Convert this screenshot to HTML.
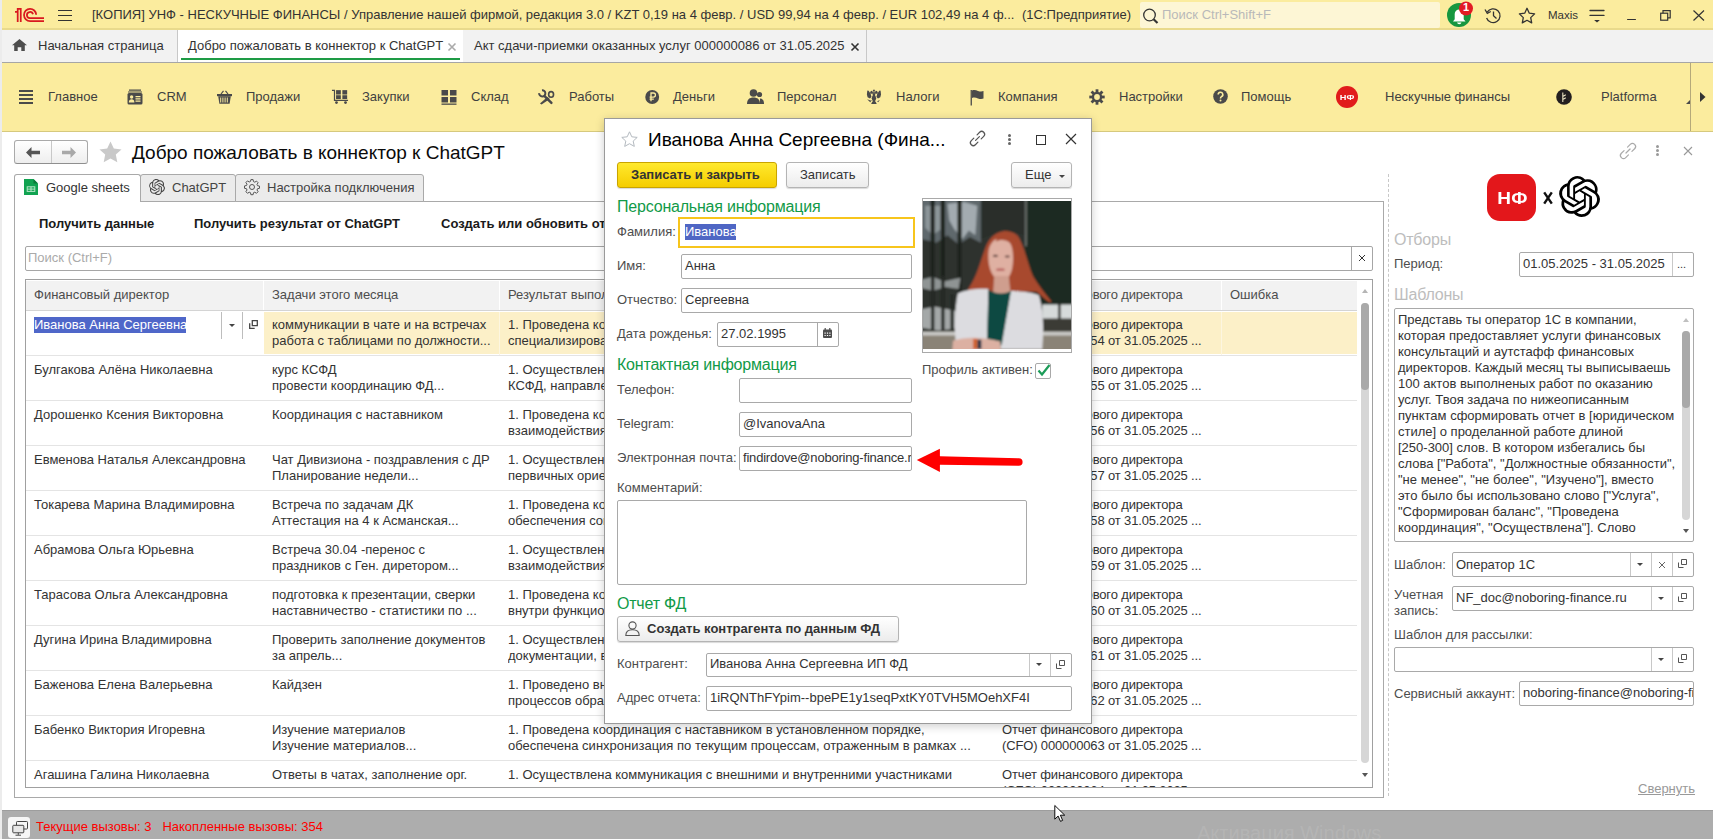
<!DOCTYPE html>
<html><head><meta charset="utf-8">
<style>
*{box-sizing:border-box}
html,body{margin:0;padding:0}
body{width:1713px;height:839px;overflow:hidden;position:relative;background:#fff;font-family:"Liberation Sans",sans-serif;font-size:13px;color:#333;}
.a{position:absolute}
.t{position:absolute;white-space:pre;line-height:16px}
.inp{position:absolute;border:1px solid #a9a9a9;border-radius:2px;background:#fff}
svg{position:absolute;overflow:visible}
</style></head><body>

<!-- TITLE BAR -->
<div class="a" style="left:0;top:0;width:1713px;height:30px;background:#fbec9e;border-bottom:2px solid #e9da8c"></div>
<svg style="left:0;top:0" width="50" height="30" viewBox="0 0 50 30">
 <g fill="none" stroke="#d9181f" stroke-width="1.75">
  <path d="M15 11.9H17.7M17.7 21.9V8.9H20.75V21.9"/>
  <path d="M36.2 14.7A6.1 6.1 0 1 0 30.1 21.05H44"/>
  <path d="M33 14.3A3.1 3.1 0 1 0 29.9 18.2H44"/>
 </g>
</svg>
<div class="a" style="left:58px;top:10px;width:14px;height:1.4px;background:#333"></div>
<div class="a" style="left:58px;top:15px;width:14px;height:1.4px;background:#333"></div>
<div class="a" style="left:58px;top:20px;width:14px;height:1.4px;background:#333"></div>
<div class="t" style="left:92px;top:7px;color:#333">[КОПИЯ] УНФ - НЕСКУЧНЫЕ ФИНАНСЫ / Управление нашей фирмой, редакция 3.0 / KZT 0,19 на 4 февр. / USD 99,94 на 4 февр. / EUR 102,49 на 4 ф...</div>
<div class="t" style="left:1022px;top:7px;color:#333">(1С:Предприятие)</div>
<div class="a" style="left:1140px;top:2px;width:300px;height:26px;background:#fdf6d5;border-radius:2px"></div>
<div class="t" style="left:1162px;top:7px;color:#b9b9b9">Поиск Ctrl+Shift+F</div>

<svg style="left:1142px;top:8px" width="17" height="16" viewBox="0 0 17 16"><circle cx="7.5" cy="7" r="5.8" fill="none" stroke="#333" stroke-width="1.3"/><path d="M11.6 11.2L15.5 15" stroke="#333" stroke-width="2.2"/></svg>
<svg style="left:1446px;top:2px" width="30" height="27" viewBox="0 0 30 27"><circle cx="13" cy="13" r="12" fill="#16973f"/><path d="M7 19.5h12.5l-1.8-2.3V12a4.5 4.5 0 0 0-9 0v5.2z" fill="#fff"/><path d="M11 20.5h4.5a2.3 2.3 0 0 1-4.5 0z" fill="#fff"/><circle cx="20" cy="6.5" r="7" fill="#e21b24"/></svg>
<div class="a" style="left:1459px;top:-1px;width:14px;text-align:center;font-weight:bold;font-size:11px;line-height:16px;color:#fff">1</div>
<svg style="left:1484px;top:7px" width="18" height="17" viewBox="0 0 18 17"><path d="M3.2 5.2A6.9 6.9 0 1 1 2.6 11" fill="none" stroke="#333" stroke-width="1.3"/><path d="M1 2.5L3.3 6.3L6.8 4.5" fill="none" stroke="#333" stroke-width="1.3"/><path d="M9.5 4.5V8.8L12.5 11.5" fill="none" stroke="#333" stroke-width="1.3"/></svg>
<svg style="left:1518px;top:7px" width="18" height="17" viewBox="0 0 18 17"><path d="M9 1.3l2.3 4.9 5.3 0.7-3.9 3.7 1 5.3-4.7-2.6-4.7 2.6 1-5.3L1.4 6.9l5.3-0.7z" fill="none" stroke="#333" stroke-width="1.3" stroke-linejoin="round"/></svg>
<div class="t" style="left:1548px;top:7px;font-size:11.5px;color:#333">Maxis</div>
<svg style="left:1589px;top:9px" width="16" height="15" viewBox="0 0 16 15"><path d="M1 1.5H15M1 6.4H15" stroke="#333" stroke-width="1.3" stroke-linecap="round"/><path d="M5.1 11H10.9L8 13.6z" fill="#333"/></svg>
<div class="a" style="left:1627px;top:18.8px;width:9px;height:1.3px;background:#333;border-radius:1px"></div>
<svg style="left:1660px;top:10px" width="11" height="11" viewBox="0 0 11 11"><path d="M3 3.2V0.7H10.2V7.9H7.7" fill="none" stroke="#333" stroke-width="1.2"/><rect x="0.7" y="3.2" width="7" height="7" fill="none" stroke="#333" stroke-width="1.2"/></svg>
<svg style="left:1693px;top:10px" width="12" height="11" viewBox="0 0 12 11"><path d="M0.5 0.5L11 10.5M11 0.5L0.5 10.5" stroke="#333" stroke-width="1.2"/></svg>

<!-- TAB BAR -->
<div class="a" style="left:0;top:30px;width:1713px;height:33px;background:#f2f2f2;border-bottom:1px solid #a6a6a6"></div>
<div class="t" style="left:38px;top:38px">Начальная страница</div>
<div class="a" style="left:177px;top:30px;width:287px;height:32px;background:#fff;border-left:1px solid #c8c8c8;border-right:1px solid #c8c8c8"></div>
<div class="a" style="left:181px;top:58px;width:279px;height:2px;background:#1e9b45"></div>
<div class="t" style="left:188px;top:38px">Добро пожаловать в коннектор к ChatGPT</div>
<div class="a" style="left:463px;top:30px;width:404px;height:32px;background:#f2f2f2;border-right:1px solid #c8c8c8"></div>
<div class="t" style="left:474px;top:38px">Акт сдачи-приемки оказанных услуг 000000086 от 31.05.2025</div>

<svg style="left:12px;top:39px" width="15" height="12" viewBox="0 0 15 12"><path d="M7.5 0L15 6.3H12.8V12H9.3V8.3H5.7V12H2.2V6.3H0z" fill="#4d4d4d"/></svg>
<svg style="left:448px;top:43px" width="8" height="8" viewBox="0 0 8 8"><path d="M0.5 0.5L7.5 7.5M7.5 0.5L0.5 7.5" stroke="#aaa" stroke-width="1.6"/></svg>
<svg style="left:851px;top:43px" width="8" height="8" viewBox="0 0 8 8"><path d="M0.5 0.5L7.5 7.5M7.5 0.5L0.5 7.5" stroke="#333" stroke-width="1.6"/></svg>

<!-- SECTION PANEL -->
<div class="a" style="left:0;top:63px;width:1713px;height:69px;background:#fbec9e;border-bottom:1px solid #d6c97e"></div>


<!-- SECTION ITEMS -->
<div class="a" style="left:19px;top:90px;width:14px;height:2px;background:#4a4a4a"></div>
<div class="a" style="left:19px;top:94px;width:14px;height:2px;background:#4a4a4a"></div>
<div class="a" style="left:19px;top:98px;width:14px;height:2px;background:#4a4a4a"></div>
<div class="a" style="left:19px;top:102px;width:14px;height:2px;background:#4a4a4a"></div>
<svg style="left:127px;top:89px" width="16" height="16" viewBox="0 0 16 16"><path d="M2 0.5h12v1.3H2z M1 2.5h14v1H1z" fill="#4a4a4a"/><rect x="0.5" y="4" width="15" height="11.5" rx="1.5" fill="#4a4a4a"/><circle cx="4.6" cy="8" r="1.7" fill="#fbec9e"/><path d="M1.8 13.5c0-2.3 1.2-3.3 2.8-3.3s2.8 1 2.8 3.3z" fill="#fbec9e"/><path d="M8.5 7h5v1.2h-5zM8.5 9.3h5v1.2h-5zM8.5 11.6h5v1.2h-5z" fill="#fbec9e"/></svg>
<svg style="left:217px;top:90px" width="15" height="14" viewBox="0 0 15 14"><path d="M4 4L6.5 0.8M11 4L8.5 0.8" stroke="#4a4a4a" stroke-width="1.2" fill="none"/><rect x="0" y="4" width="15" height="2.2" fill="#4a4a4a"/><path d="M1.2 6.2h12.6l-1.2 7.6H2.4z" fill="#4a4a4a"/><path d="M3.7 7.5v5M5.9 7.5v5M8.1 7.5v5M10.3 7.5v5" stroke="#fbec9e" stroke-width="1"/></svg>
<svg style="left:320px;top:84px" width="100" height="26" viewBox="0 0 1713 445"><g fill="#4a4a4a">
<path d="M205 100H258V270H480V290H238V120H205z"/>
<rect x="275" y="105" width="82" height="75"/><rect x="383" y="105" width="82" height="75"/>
<rect x="275" y="192" width="82" height="65"/><rect x="383" y="192" width="82" height="65"/>
<circle cx="282" cy="318" r="24"/><circle cx="437" cy="318" r="24"/>
</g></svg>
<svg style="left:441px;top:89px" width="16" height="16" viewBox="0 0 16 16"><rect x="0.5" y="1" width="6.5" height="5.5" fill="#4a4a4a"/><rect x="9" y="1" width="6.5" height="5.5" fill="#4a4a4a"/><rect x="0.5" y="8" width="6.5" height="5.5" fill="#4a4a4a"/><rect x="9" y="8" width="6.5" height="5.5" fill="#4a4a4a"/><rect x="0.5" y="14.5" width="15" height="1.3" fill="#4a4a4a"/></svg>
<svg style="left:530px;top:84px" width="140" height="26" viewBox="0 0 1713 318"><g fill="none" stroke="#4a4a4a">
<path d="M146.7 77.1A38 38 0 1 1 112.1 111.7" stroke-width="24"/>
<path d="M178 148L262 232" stroke-width="30" stroke-linecap="round"/>
<ellipse cx="258" cy="128" rx="30" ry="34" stroke-width="20"/>
</g><path d="M212 158L242 182L142 252L122 240z" fill="#4a4a4a"/></svg>
<svg style="left:645px;top:89px" width="16" height="16" viewBox="0 0 16 16"><circle cx="7.2" cy="8" r="6.95" fill="#4a4a4a"/><path d="M6 12.2V4h2.4a2.05 2.05 0 0 1 0 4.1H4.6M4.6 10.1h4.2" stroke="#fbec9e" stroke-width="1.3" fill="none"/></svg>
<svg style="left:747px;top:89px" width="17" height="15" viewBox="0 0 17 15"><circle cx="6.5" cy="4" r="3.8" fill="#4a4a4a"/><path d="M0 15c0-4.5 2.5-6.5 6.5-6.5s6.5 2 6.5 6.5z" fill="#4a4a4a"/><circle cx="12.5" cy="5.5" r="2.6" fill="#4a4a4a"/><path d="M13 15h4c0-3.5-1.5-5.5-4-5.5z" fill="#4a4a4a"/></svg>
<svg style="left:860px;top:84px" width="30" height="26" viewBox="0 0 968 839"><g fill="#4a4a4a">
<rect x="420" y="185" width="60" height="60"/>
<path d="M330 300L345 225L400 215L410 300z"/><path d="M570 300L555 225L500 215L490 300z"/>
<rect x="330" y="265" width="240" height="45"/>
<path d="M235 220Q265 195 300 250L345 320L370 420L320 470L245 430L222 340z"/>
<path d="M665 220Q635 195 600 250L555 320L530 420L580 470L655 430L678 340z"/>
<rect x="410" y="300" width="80" height="300"/>
<ellipse cx="450" cy="460" rx="70" ry="85"/>
<path d="M230 490L340 530L385 520L330 585z"/><path d="M640 520L555 560L515 520L585 585z"/>
<path d="M360 645L540 645L505 575L395 575z"/>
</g></svg>
<svg style="left:970px;top:89px" width="15" height="17" viewBox="0 0 15 17"><rect x="0.6" y="1" width="1.3" height="15.5" fill="#4a4a4a"/><path d="M2 1.5c2-0.8 4-0.4 6 0.4s4 0.8 5.5 0.2v7.5c-1.5 0.6-3.5 0.6-5.5-0.2s-4-1.2-6-0.4z" fill="#4a4a4a"/></svg>
<svg style="left:1089px;top:89px" width="16" height="16" viewBox="0 0 16 16"><g fill="#4a4a4a"><circle cx="8" cy="8" r="5.2"/><rect x="6.6" y="0.3" width="2.8" height="15.4"/><rect x="0.3" y="6.6" width="15.4" height="2.8"/><rect x="6.6" y="0.3" width="2.8" height="15.4" transform="rotate(45 8 8)"/><rect x="6.6" y="0.3" width="2.8" height="15.4" transform="rotate(-45 8 8)"/></g><circle cx="8" cy="8" r="2.9" fill="#fbec9e"/></svg>
<svg style="left:1213px;top:89px" width="15" height="15" viewBox="0 0 15 15"><circle cx="7.5" cy="7.5" r="7.3" fill="#4a4a4a"/><path d="M5.2 5.5a2.3 2.3 0 1 1 3.3 2.1c-0.8 0.4-1 0.9-1 1.8" stroke="#fbec9e" stroke-width="1.6" fill="none"/><circle cx="7.5" cy="11.5" r="1" fill="#fbec9e"/></svg>
<div class="a" style="left:1336px;top:86px;width:22px;height:22px;border-radius:50%;background:#e11b1b"></div><div class="a" style="left:1336px;top:87px;width:22px;color:#fff;font-weight:bold;font-size:8px;line-height:22px;text-align:center;transform:scaleX(1.15)">НФ</div>
<svg style="left:1556px;top:89px" width="16" height="16" viewBox="0 0 16 16"><circle cx="8" cy="8" r="7.8" fill="#231f20"/><path d="M6.8 3.5v9.5M6.8 7.5l3-1.8M6.8 10.5l3-1.8" stroke="#e8e0c0" stroke-width="1.1" fill="none"/></svg>
<div class="a" style="left:1690px;top:63px;width:1px;height:68px;background:#b5a97a"></div>
<svg style="left:1686px;top:100px" width="4" height="4" viewBox="0 0 4 4"><path d="M4 0V4H0z" fill="#4a4a4a"/></svg>
<svg style="left:1700px;top:92px" width="6" height="10" viewBox="0 0 6 10"><path d="M0 0L5.5 5L0 10z" fill="#333"/></svg>
<div class="t" style="left:48px;top:89px;color:#404040">Главное</div>
<div class="t" style="left:157px;top:89px;color:#404040">CRM</div>
<div class="t" style="left:246px;top:89px;color:#404040">Продажи</div>
<div class="t" style="left:362px;top:89px;color:#404040">Закупки</div>
<div class="t" style="left:471px;top:89px;color:#404040">Склад</div>
<div class="t" style="left:569px;top:89px;color:#404040">Работы</div>
<div class="t" style="left:673px;top:89px;color:#404040">Деньги</div>
<div class="t" style="left:777px;top:89px;color:#404040">Персонал</div>
<div class="t" style="left:896px;top:89px;color:#404040">Налоги</div>
<div class="t" style="left:998px;top:89px;color:#404040">Компания</div>
<div class="t" style="left:1119px;top:89px;color:#404040">Настройки</div>
<div class="t" style="left:1241px;top:89px;color:#404040">Помощь</div>
<div class="t" style="left:1385px;top:89px;color:#404040">Нескучные финансы</div>
<div class="t" style="left:1601px;top:89px;color:#404040">Platforma</div>


<!-- MAIN FORM HEADER -->
<div class="a" style="left:14px;top:140px;width:74px;height:24px;border:1px solid #aaa;border-bottom-color:#8f8f8f;border-radius:3px;background:linear-gradient(#fff,#eee)"></div>
<div class="a" style="left:51px;top:141px;width:1px;height:22px;background:#c8c8c8"></div>
<svg style="left:26px;top:147px" width="14" height="11" viewBox="0 0 14 11"><path d="M0 5.5L5.5 0V3.8H14V7.2H5.5V11z" fill="#555"/></svg>
<svg style="left:62px;top:147px" width="14" height="11" viewBox="0 0 14 11"><path d="M14 5.5L8.5 0V3.8H0V7.2H8.5V11z" fill="#a9a9a9"/></svg>
<svg style="left:99px;top:141px" width="23" height="22" viewBox="0 0 23 22"><path d="M11.5 0.5l3.3 7 7.7 0.9-5.7 5.2 1.5 7.6-6.8-3.8-6.8 3.8 1.5-7.6L0.5 8.4l7.7-0.9z" fill="#c9c9c9"/></svg>
<div class="a" style="left:132px;top:142px;white-space:pre;font-size:19px;line-height:22px;color:#0a0a0a">Добро пожаловать в коннектор к ChatGPT</div>

<!-- TABS -->
<div class="a" style="left:14px;top:201px;width:1370px;height:597px;border:1px solid #a9a9a9"></div>
<div class="a" style="left:140px;top:174px;width:96px;height:28px;background:#ebebeb;border:1px solid #a9a9a9;border-radius:3px 3px 0 0"></div>
<div class="a" style="left:235px;top:174px;width:189px;height:28px;background:#ebebeb;border:1px solid #a9a9a9;border-radius:3px 3px 0 0"></div>
<div class="a" style="left:14px;top:174px;width:127px;height:28px;background:#fff;border:1px solid #a9a9a9;border-bottom:none;border-radius:3px 3px 0 0"></div>
<svg style="left:24px;top:179px" width="14" height="16" viewBox="0 0 14 16"><path d="M0 0H9.5L14 4.5V16H0z" fill="#11a351"/><path d="M9.5 0L14 4.5H9.5z" fill="#0b7a3a"/><rect x="3.2" y="7.8" width="7.6" height="4.6" fill="none" stroke="#b8e6c8" stroke-width="1"/><path d="M7 7.8v4.6M3.2 10.1h7.6" stroke="#b8e6c8" stroke-width="1"/></svg>
<div class="t" style="left:46px;top:180px;color:#333">Google sheets</div>
<svg style="left:149px;top:179px" width="16" height="16" viewBox="0 0 24 24"><path fill="#444" d="M22.28 9.82a5.98 5.98 0 0 0-.52-4.91 6.05 6.05 0 0 0-6.51-2.9A6.07 6.07 0 0 0 4.98 4.18a5.98 5.98 0 0 0-4 2.9 6.05 6.05 0 0 0 .74 7.1 5.98 5.98 0 0 0 .51 4.91 6.05 6.05 0 0 0 6.51 2.9A5.98 5.98 0 0 0 13.26 24a6.06 6.06 0 0 0 5.77-4.21 5.99 5.99 0 0 0 4-2.9 6.06 6.06 0 0 0-.75-7.07zM13.26 22.43a4.48 4.48 0 0 1-2.88-1.04l.14-.08 4.78-2.76a.8.8 0 0 0 .39-.68v-6.74l2.02 1.17a.07.07 0 0 1 .04.05v5.58a4.5 4.5 0 0 1-4.49 4.5zM3.6 18.3a4.47 4.47 0 0 1-.54-3.01l.14.09 4.78 2.76a.77.77 0 0 0 .78 0l5.84-3.37v2.33a.08.08 0 0 1-.03.06L9.74 19.95a4.5 4.5 0 0 1-6.14-1.65zM2.34 7.9a4.49 4.49 0 0 1 2.37-1.97V11.6a.77.77 0 0 0 .39.68l5.81 3.35-2.02 1.17a.08.08 0 0 1-.07 0L4 14.02A4.5 4.5 0 0 1 2.34 7.87zm16.6 3.86L13.1 8.36 15.12 7.2a.08.08 0 0 1 .07 0l4.83 2.79a4.49 4.49 0 0 1-.68 8.1v-5.68a.79.79 0 0 0-.41-.67zm2.01-3.02l-.14-.09-4.77-2.78a.78.78 0 0 0-.79 0L9.41 9.23V6.9a.07.07 0 0 1 .03-.06l4.83-2.79a4.5 4.5 0 0 1 6.68 4.66zM8.31 12.86L6.29 11.7a.08.08 0 0 1-.04-.06V6.08a4.5 4.5 0 0 1 7.38-3.45l-.14.08L8.7 5.47a.8.8 0 0 0-.39.68zm1.1-2.37l2.6-1.5 2.6 1.5v3l-2.6 1.5-2.6-1.5z"/></svg>
<div class="t" style="left:172px;top:180px;color:#444">ChatGPT</div>
<svg style="left:244px;top:179px" width="16" height="16" viewBox="0 0 16 16"><path d="M6.9 0.6h2.2l0.4 2 1.3 0.6 1.7-1.1 1.6 1.6-1.1 1.7 0.5 1.3 2 0.4v2.2l-2 0.4-0.5 1.3 1.1 1.7-1.6 1.6-1.7-1.1-1.3 0.5-0.4 2H6.9l-0.4-2-1.3-0.5-1.7 1.1-1.6-1.6 1.1-1.7-0.5-1.3-2-0.4V6.9l2-0.4 0.5-1.3-1.1-1.7 1.6-1.6 1.7 1.1 1.3-0.6z" fill="none" stroke="#555" stroke-width="1"/><circle cx="8" cy="8" r="2.5" fill="none" stroke="#555" stroke-width="1"/></svg>
<div class="t" style="left:267px;top:180px;color:#444">Настройка подключения</div>

<!-- COMMAND BAR -->
<div class="t" style="left:39px;top:216px;font-weight:bold;color:#1a1a1a">Получить данные</div>
<div class="t" style="left:194px;top:216px;font-weight:bold;color:#1a1a1a">Получить результат от ChatGPT</div>
<div class="t" style="left:441px;top:216px;font-weight:bold;color:#1a1a1a">Создать или обновить отчеты</div>

<!-- SEARCH -->
<div class="inp" style="left:25px;top:246px;width:1348px;height:25px;border-color:#a6a6a6"></div>
<div class="a" style="left:1351px;top:247px;width:1px;height:23px;background:#a6a6a6"></div>
<svg style="left:1359px;top:255px" width="6" height="6" viewBox="0 0 6 6"><path d="M0 0L6 6M6 0L0 6" stroke="#333" stroke-width="1"/></svg>
<div class="t" style="left:28px;top:250px;color:#aaa">Поиск (Ctrl+F)</div>

<!-- GRID -->
<div class="a" style="left:25px;top:279px;width:1348px;height:509px;border:1px solid #a0a0a0;overflow:hidden;background:#fff">
<div class="a" style="left:0;top:1px;width:1331px;height:30px;background:#f2f2f2;border-bottom:1px solid #d4d4d4"></div>
<div class="a" style="left:237px;top:1px;width:1px;height:29px;background:#fff"></div>
<div class="a" style="left:473px;top:1px;width:1px;height:29px;background:#fff"></div>
<div class="a" style="left:967px;top:1px;width:1px;height:29px;background:#fff"></div>
<div class="a" style="left:1195px;top:1px;width:1px;height:29px;background:#fff"></div>
<div class="t" style="left:8px;top:7px;color:#4d4d4d">Финансовый директор</div>
<div class="t" style="left:246px;top:7px;color:#4d4d4d">Задачи этого месяца</div>
<div class="t" style="left:482px;top:7px;color:#4d4d4d">Результат выполнения</div>
<div class="t" style="left:976px;top:7px;color:#4d4d4d;letter-spacing:-0.15px">Отчет финансового директора</div>
<div class="t" style="left:1204px;top:7px;color:#4d4d4d">Ошибка</div>
<div class="a" style="left:238px;top:32px;width:1093px;height:42px;background:#fcf0c8"></div>
<div class="a" style="left:473px;top:32px;width:1px;height:43px;background:#fdf6e0"></div>
<div class="a" style="left:967px;top:32px;width:1px;height:43px;background:#fdf6e0"></div>
<div class="a" style="left:1195px;top:32px;width:1px;height:43px;background:#fdf6e0"></div>
<div class="a" style="left:0;top:75px;width:1331px;height:1px;background:#e4e4e4"></div>
<div class="a" style="left:8px;top:37px;width:152px;height:16px;background:#4f67c9"></div>
<div class="t" style="left:8px;top:37px;color:#fff">Иванова Анна Сергеевна</div>
<div class="a" style="left:195px;top:32px;width:1px;height:27px;background:#bdbdbd"></div>
<div class="a" style="left:216px;top:32px;width:1px;height:27px;background:#bdbdbd"></div>
<svg style="left:203px;top:44px" width="6" height="3" viewBox="0 0 6 3"><path d="M0 0H6L3 3z" fill="#444"/></svg>
<svg style="left:223px;top:40px" width="9" height="9" viewBox="0 0 9 9"><path d="M3.3 0.7h5v5h-5z M0.7 3.3v5h5" fill="none" stroke="#444" stroke-width="1.3"/></svg>
<div class="t" style="left:246px;top:37px">коммуникации в чате и на встречах
работа с таблицами по должности...</div>
<div class="t" style="left:482px;top:37px;width:480px;overflow:hidden">1. Проведена координация в чате и на встречах, обеспечено
специализированное сопровождение по текущим задачам ...</div>
<div class="t" style="left:976px;top:37px;letter-spacing:-0.15px">Отчет финансового директора
(CFO) 000000054 от 31.05.2025 ...</div>
<div class="a" style="left:0;top:120px;width:1331px;height:1px;background:#e4e4e4"></div>
<div class="t" style="left:8px;top:82px">Булгакова Алёна Николаевна</div>
<div class="t" style="left:246px;top:82px">курс КСФД
провести координацию ФД...</div>
<div class="t" style="left:482px;top:82px;width:480px;overflow:hidden">1. Осуществлено прохождение курса по программе
КСФД, направленное на повышение квалификации ...</div>
<div class="t" style="left:976px;top:82px;letter-spacing:-0.15px">Отчет финансового директора
(CFO) 000000055 от 31.05.2025 ...</div>
<div class="a" style="left:0;top:165px;width:1331px;height:1px;background:#e4e4e4"></div>
<div class="t" style="left:8px;top:127px">Дорошенко Ксения Викторовна</div>
<div class="t" style="left:246px;top:127px">Координация с наставником</div>
<div class="t" style="left:482px;top:127px;width:480px;overflow:hidden">1. Проведена координация с наставником в рамках
взаимодействия по текущим процессам ...</div>
<div class="t" style="left:976px;top:127px;letter-spacing:-0.15px">Отчет финансового директора
(CFO) 000000056 от 31.05.2025 ...</div>
<div class="a" style="left:0;top:210px;width:1331px;height:1px;background:#e4e4e4"></div>
<div class="t" style="left:8px;top:172px">Евменова Наталья Александровна</div>
<div class="t" style="left:246px;top:172px">Чат Дивизиона - поздравления с ДР
Планирование недели...</div>
<div class="t" style="left:482px;top:172px;width:480px;overflow:hidden">1. Осуществлена коммуникация в чате дивизиона и
первичных ориентиров по планированию недели ...</div>
<div class="t" style="left:976px;top:172px;letter-spacing:-0.15px">Отчет финансового директора
(CFO) 000000057 от 31.05.2025 ...</div>
<div class="a" style="left:0;top:255px;width:1331px;height:1px;background:#e4e4e4"></div>
<div class="t" style="left:8px;top:217px">Токарева Марина Владимировна</div>
<div class="t" style="left:246px;top:217px">Встреча по задачам ДК
Аттестация на 4 к Асманская...</div>
<div class="t" style="left:482px;top:217px;width:480px;overflow:hidden">1. Проведена координация по задачам ДК в целях
обеспечения согласованности процессов ...</div>
<div class="t" style="left:976px;top:217px;letter-spacing:-0.15px">Отчет финансового директора
(CFO) 000000058 от 31.05.2025 ...</div>
<div class="a" style="left:0;top:300px;width:1331px;height:1px;background:#e4e4e4"></div>
<div class="t" style="left:8px;top:262px">Абрамова Ольга Юрьевна</div>
<div class="t" style="left:246px;top:262px">Встреча 30.04 -перенос с
праздников с Ген. диретором...</div>
<div class="t" style="left:482px;top:262px;width:480px;overflow:hidden">1. Осуществлена коммуникация в рамках
взаимодействия с генеральным директором ...</div>
<div class="t" style="left:976px;top:262px;letter-spacing:-0.15px">Отчет финансового директора
(CFO) 000000059 от 31.05.2025 ...</div>
<div class="a" style="left:0;top:345px;width:1331px;height:1px;background:#e4e4e4"></div>
<div class="t" style="left:8px;top:307px">Тарасова Ольга Александровна</div>
<div class="t" style="left:246px;top:307px">подготовка к презентации, сверки
наставничество - статистики по ...</div>
<div class="t" style="left:482px;top:307px;width:480px;overflow:hidden">1. Проведена координация по подготовке презентации
внутри функционального направления ...</div>
<div class="t" style="left:976px;top:307px;letter-spacing:-0.15px">Отчет финансового директора
(CFO) 000000060 от 31.05.2025 ...</div>
<div class="a" style="left:0;top:390px;width:1331px;height:1px;background:#e4e4e4"></div>
<div class="t" style="left:8px;top:352px">Дугина Ирина Владимировна</div>
<div class="t" style="left:246px;top:352px">Проверить заполнение документов
за апрель...</div>
<div class="t" style="left:482px;top:352px;width:480px;overflow:hidden">1. Осуществлена проверка заполнения первичной
документации, в установленном порядке ...</div>
<div class="t" style="left:976px;top:352px;letter-spacing:-0.15px">Отчет финансового директора
(CFO) 000000061 от 31.05.2025 ...</div>
<div class="a" style="left:0;top:435px;width:1331px;height:1px;background:#e4e4e4"></div>
<div class="t" style="left:8px;top:397px">Баженова Елена Валерьевна</div>
<div class="t" style="left:246px;top:397px">Кайдзен</div>
<div class="t" style="left:482px;top:397px;width:480px;overflow:hidden">1. Проведено внедрение методики Кайдзен в рамках
процессов обработки данных ...</div>
<div class="t" style="left:976px;top:397px;letter-spacing:-0.15px">Отчет финансового директора
(CFO) 000000062 от 31.05.2025 ...</div>
<div class="a" style="left:0;top:480px;width:1331px;height:1px;background:#e4e4e4"></div>
<div class="t" style="left:8px;top:442px">Бабенко Виктория Игоревна</div>
<div class="t" style="left:246px;top:442px">Изучение материалов
Изучение материалов...</div>
<div class="t" style="left:482px;top:442px;width:480px;overflow:hidden">1. Проведена координация с наставником в установленном порядке,
обеспечена синхронизация по текущим процессам, отраженным в рамках ...</div>
<div class="t" style="left:976px;top:442px;letter-spacing:-0.15px">Отчет финансового директора
(CFO) 000000063 от 31.05.2025 ...</div>
<div class="a" style="left:0;top:525px;width:1331px;height:1px;background:#e4e4e4"></div>
<div class="t" style="left:8px;top:487px">Агашина Галина Николаевна</div>
<div class="t" style="left:246px;top:487px">Ответы в чатах, заполнение орг.</div>
<div class="t" style="left:482px;top:487px;width:480px;overflow:hidden">1. Осуществлена коммуникация с внешними и внутренними участниками
</div>
<div class="t" style="left:976px;top:487px;letter-spacing:-0.15px">Отчет финансового директора
(CFO) 000000064 от 31.05.2025 ...</div>
<svg style="left:1336px;top:9px" width="6" height="4" viewBox="0 0 6 4"><path d="M0 4L3 0L6 4z" fill="#b5b5b5"/></svg>
<div class="a" style="left:1335px;top:23px;width:8px;height:460px;border-radius:4px;background:#d6d6d6"></div>
<div class="a" style="left:1335px;top:23px;width:8px;height:87px;border-radius:4px;background:#a9a9a9"></div>
<svg style="left:1336px;top:493px" width="6" height="4" viewBox="0 0 6 4"><path d="M0 0L3 4L6 0z" fill="#555"/></svg>
</div>


<!-- DIALOG -->
<div class="a" style="left:604px;top:118px;width:488px;height:606px;background:#fff;border:1px solid #9a9a9a;box-shadow:0 2px 9px rgba(0,0,0,0.2)"></div>
<svg style="left:621px;top:131px" width="17" height="16" viewBox="0 0 17 16"><path d="M8.5 0.8l2.3 5 5.4 0.6-4 3.7 1.1 5.3-4.8-2.7-4.8 2.7 1.1-5.3-4-3.7 5.4-0.6z" fill="none" stroke="#b4bac0" stroke-width="1"/></svg>
<div class="a" style="left:648px;top:129px;white-space:pre;font-size:19px;line-height:22px;color:#000">Иванова Анна Сергеевна (Фина...</div>
<svg style="left:970px;top:131px" width="15" height="15" viewBox="0 0 15 15"><g transform="rotate(-45 7.5 7.5)" fill="none" stroke="#555" stroke-width="1.2" stroke-linecap="round"><path d="M5.2 4.6H1.6a2.9 2.9 0 0 0 0 5.8H5.2"/><path d="M9.8 4.6h3.6a2.9 2.9 0 0 1 0 5.8H9.8"/><path d="M4.8 7.5h5.4"/></g></svg>
<div class="a" style="left:1008px;top:134px;width:3px;height:3px;border-radius:50%;background:#666"></div>
<div class="a" style="left:1008px;top:138px;width:3px;height:3px;border-radius:50%;background:#666"></div>
<div class="a" style="left:1008px;top:142px;width:3px;height:3px;border-radius:50%;background:#666"></div>
<div class="a" style="left:1036px;top:135px;width:10px;height:10px;border:1.3px solid #333"></div>
<svg style="left:1066px;top:134px" width="10" height="10" viewBox="0 0 10 10"><path d="M0 0L10 10M10 0L0 10" stroke="#333" stroke-width="1.2"/></svg>

<div class="a" style="left:617px;top:162px;width:160px;height:26px;border:1px solid #c9a400;border-radius:3px;background:linear-gradient(#ffe92e,#f5cd00);box-shadow:0 1px 1px rgba(0,0,0,0.15)"></div>
<div class="t" style="left:631px;top:167px;font-weight:bold;color:#333">Записать и закрыть</div>
<div class="a" style="left:786px;top:162px;width:83px;height:26px;border:1px solid #b4b4b4;border-radius:3px;background:linear-gradient(#fff,#ececec);box-shadow:0 1px 1px rgba(0,0,0,0.15)"></div>
<div class="t" style="left:800px;top:167px;color:#333">Записать</div>
<div class="a" style="left:1011px;top:162px;width:61px;height:26px;border:1px solid #b4b4b4;border-radius:3px;background:linear-gradient(#fff,#ececec);box-shadow:0 1px 1px rgba(0,0,0,0.15)"></div>
<div class="t" style="left:1025px;top:167px;color:#333">Еще</div>
<svg style="left:1059px;top:175px" width="6" height="3" viewBox="0 0 6 3"><path d="M0 0H6L3 3z" fill="#444"/></svg>

<div class="a" style="left:617px;top:198px;white-space:pre;font-size:16px;letter-spacing:-0.2px;line-height:18px;color:#119a48">Персональная информация</div>
<div class="t" style="left:617px;top:224px;color:#4d4d4d">Фамилия:</div>
<div class="a" style="left:678px;top:217px;width:237px;height:31px;border:2px solid #f7c51c"></div>
<div class="a" style="left:685px;top:224px;width:51px;height:16px;background:#4f66c4"></div>
<div class="t" style="left:685px;top:224px;color:#fff">Иванова</div>
<div class="t" style="left:617px;top:258px;color:#4d4d4d">Имя:</div>
<div class="inp" style="left:681px;top:254px;width:231px;height:25px"></div>
<div class="t" style="left:685px;top:258px">Анна</div>
<div class="t" style="left:617px;top:292px;color:#4d4d4d">Отчество:</div>
<div class="inp" style="left:681px;top:288px;width:231px;height:25px"></div>
<div class="t" style="left:685px;top:292px">Сергеевна</div>
<div class="t" style="left:617px;top:326px;color:#4d4d4d">Дата рожденья:</div>
<div class="inp" style="left:717px;top:322px;width:122px;height:25px"></div>
<div class="a" style="left:817px;top:323px;width:1px;height:23px;background:#a9a9a9"></div>
<svg style="left:823px;top:328px" width="9" height="10" viewBox="0 0 9 10"><rect x="0" y="1.5" width="9" height="8.5" rx="1" fill="#4d4d4d"/><path d="M2.2 0v2.5M6.8 0v2.5" stroke="#4d4d4d" stroke-width="1.2"/><path d="M1.5 4.5h1.2v1.2H1.5zM3.9 4.5h1.2v1.2H3.9zM6.3 4.5h1.2v1.2H6.3zM1.5 6.9h1.2v1.2H1.5zM3.9 6.9h1.2v1.2H3.9zM6.3 6.9h1.2v1.2H6.3z" fill="#fff"/></svg>
<div class="t" style="left:721px;top:326px">27.02.1995</div>

<!-- photo -->
<div class="a" style="left:922px;top:198px;width:150px;height:155px;border:1px solid #a9a9a9;background:#fff"></div>
<svg style="left:923px;top:201px" width="148" height="148" viewBox="8 15 797 800" preserveAspectRatio="none">
 <defs>
  <filter id="bl" x="-5%" y="-5%" width="110%" height="110%"><feGaussianBlur stdDeviation="7"/></filter>
  <clipPath id="pc"><rect x="8" y="15" width="797" height="800"/></clipPath>
 </defs>
 <g clip-path="url(#pc)"><g filter="url(#bl)">
 <rect x="-20" y="-20" width="860" height="860" fill="#2d332e"/>
 <path d="M0 0H320V240L260 210 200 250 140 200 80 240 0 220z" fill="#5f686c"/>
 <path d="M140 30L230 20 300 40 290 200 255 175 220 220 175 165 150 120z" fill="#a3abb0"/>
 <path d="M20 40H100V170L60 200 20 160z" fill="#8d969a"/>
 <path d="M60 0V720M115 0V720M205 0V700" stroke="#1d221e" stroke-width="22"/>
 <path d="M320 0H560V200L440 170 320 220z" fill="#2a2f2b"/>
 <path d="M560 0H840V600H560z" fill="#1f2922"/>
 <path d="M562 0V260" stroke="#6a706c" stroke-width="10"/>
 <path d="M0 440L60 425 120 450 210 430 200 490 130 480 60 500 0 485z" fill="#b0b5b7" opacity="0.75"/>
 <path d="M0 600L70 585 190 610 180 705 90 715 0 700z" fill="#c2c6c7" opacity="0.8"/>
 <path d="M60 420V720M115 420V720M165 520V720" stroke="#262a27" stroke-width="18"/>
 <path d="M650 575H840V655H650z" fill="#d6dada"/>
 <path d="M742 570V680" stroke="#2a2e2a" stroke-width="14"/>
 <path d="M640 650H840V720H640z" fill="#3a3b34"/>
 <path d="M0 720H840V840H0z" fill="#8a8377"/>
 <path d="M0 722H840V742H0z" fill="#c9c9c6"/>
 <path d="M440 178C395 185 365 215 345 265C320 330 300 420 255 485C240 505 265 515 300 505L620 505C660 540 690 570 700 560C670 520 630 470 600 420C570 350 555 260 520 205C500 185 470 176 440 178z" fill="#a84a2d"/>
 <path d="M425 215C390 215 362 250 360 300 358 360 372 410 400 432 420 446 445 446 465 430 490 405 495 350 492 300 490 250 470 218 425 215z" fill="#dfb0a2"/>
 <path d="M400 235C430 215 480 225 500 270L510 230 470 195 410 205z" fill="#a84a2d"/>
 <path d="M392 420H470L480 520H385z" fill="#cf9e8e"/>
 <ellipse cx="398" cy="312" rx="14" ry="6" fill="#5b3f3a"/>
 <ellipse cx="462" cy="315" rx="14" ry="6" fill="#5b3f3a"/>
 <ellipse cx="425" cy="386" rx="24" ry="8" fill="#bd6a66"/>
 <path d="M195 515C240 495 300 488 360 490L355 790H185C175 700 180 600 195 515z" fill="#dcdce0"/>
 <path d="M480 500C540 505 600 508 632 525 655 600 660 700 650 815H425z" fill="#dcdce0"/>
 <path d="M360 495C400 520 450 520 482 500L432 792H352z" fill="#0f4a42"/>
 <path d="M170 770C240 745 340 750 425 775V830H165z" fill="#dcb0a2"/>
 <path d="M278 760H302V815H278z" fill="#d0622e"/>
 <path d="M302 765H322V815H302z" fill="#1f2f45"/>
 </g></g>
</svg>
<div class="t" style="left:922px;top:362px;color:#4d4d4d">Профиль активен:</div>
<div class="a" style="left:1035px;top:363px;width:16px;height:16px;border:1px solid #a9a9a9;border-radius:2px;background:#fff"></div>
<svg style="left:1037px;top:364px" width="14" height="13" viewBox="0 0 14 13"><path d="M1.5 6.5L5 10.5L12.5 1" fill="none" stroke="#1c9c58" stroke-width="2.2"/></svg>

<div class="a" style="left:617px;top:356px;white-space:pre;font-size:16px;letter-spacing:-0.2px;line-height:18px;color:#119a48">Контактная информация</div>
<div class="t" style="left:617px;top:382px;color:#4d4d4d">Телефон:</div>
<div class="inp" style="left:739px;top:378px;width:173px;height:25px"></div>
<div class="t" style="left:617px;top:416px;color:#4d4d4d">Telegram:</div>
<div class="inp" style="left:739px;top:412px;width:173px;height:25px"></div>
<div class="t" style="left:743px;top:416px">@IvanovaAna</div>
<div class="t" style="left:617px;top:450px;color:#4d4d4d">Электронная почта:</div>
<div class="inp" style="left:739px;top:446px;width:173px;height:25px;overflow:hidden"><div class="t" style="left:3px;top:3px;letter-spacing:-0.2px">findirdove@noboring-finance.ru</div></div>
<svg style="left:916px;top:448px" width="108" height="25" viewBox="0 0 108 25"><path d="M0.8 12.1L23.9 0.7V8.3L102.8 10.2A3.8 3.8 0 0 1 102.8 17.8L23.9 16.7V23.9z" fill="#ff0000"/></svg>
<div class="t" style="left:617px;top:480px;color:#4d4d4d">Комментарий:</div>
<div class="inp" style="left:617px;top:500px;width:410px;height:85px"></div>

<div class="a" style="left:617px;top:595px;white-space:pre;font-size:16px;letter-spacing:-0.2px;line-height:18px;color:#119a48">Отчет ФД</div>
<div class="a" style="left:617px;top:616px;width:282px;height:26px;border:1px solid #b4b4b4;border-radius:3px;background:linear-gradient(#fff,#ececec);box-shadow:0 1px 1px rgba(0,0,0,0.15)"></div>
<svg style="left:625px;top:621px" width="15" height="15" viewBox="0 0 15 15"><circle cx="7.5" cy="4.5" r="3.6" fill="none" stroke="#555" stroke-width="1.1"/><path d="M0.8 14.5c0-3.8 2.8-5.8 6.7-5.8s6.7 2 6.7 5.8z" fill="none" stroke="#555" stroke-width="1.1"/></svg>
<div class="t" style="left:647px;top:621px;font-weight:bold;color:#333">Создать контрагента по данным ФД</div>
<div class="t" style="left:617px;top:656px;color:#4d4d4d">Контрагент:</div>
<div class="inp" style="left:706px;top:653px;width:366px;height:24px"></div>
<div class="a" style="left:1029px;top:654px;width:1px;height:22px;background:#c8c8c8"></div>
<div class="a" style="left:1050px;top:654px;width:1px;height:22px;background:#c8c8c8"></div>
<svg style="left:1036px;top:663px" width="6" height="3" viewBox="0 0 6 3"><path d="M0 0H6L3 3z" fill="#444"/></svg>
<svg style="left:1056px;top:660px" width="9" height="9" viewBox="0 0 9 9"><path d="M3.5 0.5h5v5h-5z M0.5 3.5v5h5" fill="none" stroke="#555" stroke-width="1"/></svg>
<div class="t" style="left:710px;top:656px">Иванова Анна Сергеевна ИП ФД</div>
<div class="t" style="left:617px;top:690px;color:#4d4d4d">Адрес отчета:</div>
<div class="inp" style="left:706px;top:686px;width:366px;height:25px"></div>
<div class="t" style="left:710px;top:690px">1iRQNThFYpim--bpePE1y1seqPxtKY0TVH5MOehXF4I</div>


<!-- RIGHT PANEL -->
<svg style="left:1620px;top:143px" width="16" height="16" viewBox="0 0 15 15"><g transform="rotate(-45 7.5 7.5)" fill="none" stroke="#aaa" stroke-width="1.1" stroke-linecap="round"><path d="M5.2 4.6H1.6a2.9 2.9 0 0 0 0 5.8H5.2"/><path d="M9.8 4.6h3.6a2.9 2.9 0 0 1 0 5.8H9.8"/><path d="M4.8 7.5h5.4"/></g></svg>
<div class="a" style="left:1656px;top:145px;width:3px;height:3px;border-radius:50%;background:#999"></div>
<div class="a" style="left:1656px;top:149px;width:3px;height:3px;border-radius:50%;background:#999"></div>
<div class="a" style="left:1656px;top:153px;width:3px;height:3px;border-radius:50%;background:#999"></div>
<svg style="left:1684px;top:147px" width="8" height="8" viewBox="0 0 8 8"><path d="M0 0L8 8M8 0L0 8" stroke="#999" stroke-width="1.1"/></svg>
<div class="a" style="left:1388px;top:174px;width:0;height:622px;border-left:1px dashed #c8c8c8"></div>
<div class="a" style="left:1487px;top:174px;width:49px;height:47px;border-radius:13px;background:#e3171b"></div>
<div class="a" style="left:1488px;top:187px;width:49px;text-align:center;font-weight:bold;font-size:16.5px;line-height:22px;color:#fff;letter-spacing:0.3px;transform:scaleX(1.15)">НФ</div>
<svg style="left:1543px;top:192px" width="10" height="12" viewBox="0 0 10 12"><path d="M1.2 0.3L8.8 11.7M8.8 0.3L1.2 11.7" stroke="#111" stroke-width="2.4"/></svg>
<svg style="left:1559px;top:176px" width="41" height="41" viewBox="0 0 24 24"><path fill="#000" d="M22.28 9.82a5.98 5.98 0 0 0-.52-4.91 6.05 6.05 0 0 0-6.51-2.9A6.07 6.07 0 0 0 4.98 4.18a5.98 5.98 0 0 0-4 2.9 6.05 6.05 0 0 0 .74 7.1 5.98 5.98 0 0 0 .51 4.91 6.05 6.05 0 0 0 6.51 2.9A5.98 5.98 0 0 0 13.26 24a6.06 6.06 0 0 0 5.77-4.21 5.99 5.99 0 0 0 4-2.9 6.06 6.06 0 0 0-.75-7.07zM13.26 22.43a4.48 4.48 0 0 1-2.88-1.04l.14-.08 4.78-2.76a.8.8 0 0 0 .39-.68v-6.74l2.02 1.17a.07.07 0 0 1 .04.05v5.58a4.5 4.5 0 0 1-4.49 4.5zM3.6 18.3a4.47 4.47 0 0 1-.54-3.01l.14.09 4.78 2.760a.77.77 0 0 0 .78 0l5.84-3.37v2.33a.08.08 0 0 1-.03.06L9.74 19.95a4.5 4.5 0 0 1-6.14-1.65zM2.34 7.9a4.49 4.49 0 0 1 2.37-1.97V11.6a.77.77 0 0 0 .39.68l5.81 3.35-2.02 1.17a.08.08 0 0 1-.07 0L4 14.02A4.5 4.5 0 0 1 2.34 7.870zm16.6 3.86L13.1 8.36 15.12 7.2a.08.08 0 0 1 .07 0l4.83 2.79a4.490 4.49 0 0 1-.68 8.1v-5.68a.79.79 0 0 0-.41-.67zm2.01-3.020l-.14-.09-4.77-2.78a.78.78 0 0 0-.79 0L9.41 9.23V6.9a.07.07 0 0 1 .03-.06l4.83-2.79a4.5 4.5 0 0 1 6.68 4.66zM8.31 12.86L6.29 11.7a.08.08 0 0 1-.04-.06V6.08a4.5 4.5 0 0 1 7.38-3.45l-.14.08L8.7 5.47a.8.8 0 0 0-.39.68zm1.1-2.37l2.6-1.5 2.6 1.5v3l-2.6 1.5-2.6-1.5z"/></svg>

<div class="a" style="left:1394px;top:231px;white-space:pre;font-size:16px;letter-spacing:-0.2px;line-height:18px;color:#bdbdbd">Отборы</div>
<div class="t" style="left:1394px;top:256px;color:#4d4d4d">Период:</div>
<div class="inp" style="left:1519px;top:252px;width:175px;height:25px"></div>
<div class="a" style="left:1672px;top:253px;width:1px;height:23px;background:#c8c8c8"></div>
<div class="t" style="left:1523px;top:256px">01.05.2025 - 31.05.2025</div>
<div class="t" style="left:1677px;top:256px;font-size:11px">...</div>
<div class="a" style="left:1394px;top:286px;white-space:pre;font-size:16px;letter-spacing:-0.2px;line-height:18px;color:#bdbdbd">Шаблоны</div>
<div class="inp" style="left:1394px;top:308px;width:300px;height:234px"></div>
<div class="t" style="left:1398px;top:312px;color:#333">Представь ты оператор 1С в компании,
которая предоставляет услуги финансовых
консультаций и аутстафф финансовых
директоров. Каждый месяц ты выписываешь
100 актов выполненых работ по оказанию
услуг. Твоя задача по нижеописанным
пунктам сформировать отчет в [юридическом
стиле] о проделанной работе длиной
[250-300] слов. В котором избегались бы
слова ["Работа", "Должностные обязанности",
"не менее", "не более", "Изучено"], вместо
это было бы использовано слово ["Услуга",
"Сформирован баланс", "Проведена
координация", "Осуществлена"]. Слово</div>
<svg style="left:1683px;top:318px" width="6" height="4" viewBox="0 0 6 4"><path d="M0 4L3 0L6 4z" fill="#c0c0c0"/></svg>
<div class="a" style="left:1682px;top:331px;width:8px;height:189px;border-radius:4px;background:#d6d6d6"></div>
<div class="a" style="left:1682px;top:331px;width:8px;height:77px;border-radius:4px;background:#a9a9a9"></div>
<svg style="left:1683px;top:529px" width="6" height="4" viewBox="0 0 6 4"><path d="M0 0L3 4L6 0z" fill="#555"/></svg>

<div class="t" style="left:1394px;top:557px;color:#4d4d4d">Шаблон:</div>
<div class="inp" style="left:1452px;top:552px;width:242px;height:25px"></div>
<div class="a" style="left:1630px;top:553px;width:1px;height:23px;background:#c8c8c8"></div>
<div class="a" style="left:1651px;top:553px;width:1px;height:23px;background:#c8c8c8"></div>
<div class="a" style="left:1672px;top:553px;width:1px;height:23px;background:#c8c8c8"></div>
<svg style="left:1637px;top:563px" width="6" height="3" viewBox="0 0 6 3"><path d="M0 0H6L3 3z" fill="#444"/></svg>
<svg style="left:1659px;top:562px" width="6" height="6" viewBox="0 0 6 6"><path d="M0 0L6 6M6 0L0 6" stroke="#666" stroke-width="1"/></svg>
<svg style="left:1678px;top:559px" width="9" height="9" viewBox="0 0 9 9"><path d="M3.5 0.5h5v5h-5z M0.5 3.5v5h5" fill="none" stroke="#555" stroke-width="1"/></svg>
<div class="t" style="left:1456px;top:557px">Оператор 1С</div>

<div class="t" style="left:1394px;top:587px;color:#4d4d4d">Учетная
запись:</div>
<div class="inp" style="left:1452px;top:586px;width:242px;height:25px"></div>
<div class="a" style="left:1651px;top:587px;width:1px;height:23px;background:#c8c8c8"></div>
<div class="a" style="left:1672px;top:587px;width:1px;height:23px;background:#c8c8c8"></div>
<svg style="left:1658px;top:597px" width="6" height="3" viewBox="0 0 6 3"><path d="M0 0H6L3 3z" fill="#444"/></svg>
<svg style="left:1678px;top:593px" width="9" height="9" viewBox="0 0 9 9"><path d="M3.5 0.5h5v5h-5z M0.5 3.5v5h5" fill="none" stroke="#555" stroke-width="1"/></svg>
<div class="t" style="left:1456px;top:590px">NF_doc@noboring-finance.ru</div>

<div class="t" style="left:1394px;top:627px;color:#4d4d4d">Шаблон для рассылки:</div>
<div class="inp" style="left:1394px;top:647px;width:300px;height:25px"></div>
<div class="a" style="left:1651px;top:648px;width:1px;height:23px;background:#c8c8c8"></div>
<div class="a" style="left:1672px;top:648px;width:1px;height:23px;background:#c8c8c8"></div>
<svg style="left:1658px;top:658px" width="6" height="3" viewBox="0 0 6 3"><path d="M0 0H6L3 3z" fill="#444"/></svg>
<svg style="left:1678px;top:654px" width="9" height="9" viewBox="0 0 9 9"><path d="M3.5 0.5h5v5h-5z M0.5 3.5v5h5" fill="none" stroke="#555" stroke-width="1"/></svg>

<div class="t" style="left:1394px;top:686px;color:#4d4d4d">Сервисный аккаунт:</div>
<div class="inp" style="left:1519px;top:681px;width:175px;height:25px;overflow:hidden"><div class="t" style="left:3px;top:3px">noboring-finance@noboring-finance.iam.gserviceaccount.com</div></div>
<div class="t" style="left:1638px;top:781px;color:#999;text-decoration:underline">Свернуть</div>

<!-- STATUS BAR -->
<div class="a" style="left:0;top:810px;width:1713px;height:29px;background:#adadad;border-top:1px solid #9d9d9d"></div>
<div class="a" style="left:8px;top:817px;width:22px;height:21px;background:#f6f6f6;border-radius:3px"></div>
<svg style="left:12px;top:821px" width="17" height="15" viewBox="0 0 17 15"><rect x="4.5" y="0.5" width="11" height="7.5" rx="0.8" fill="#f6f6f6" stroke="#444" stroke-width="1"/><rect x="0.8" y="4.3" width="11" height="7.5" rx="0.8" fill="#e8e8e8" stroke="#444" stroke-width="1"/><path d="M6.3 11.8V13.8M3.5 14.2H9" stroke="#444" stroke-width="1"/></svg>
<div class="t" style="left:36px;top:819px;color:#f00">Текущие вызовы: 3   Накопленные вызовы: 354</div>

<!-- LEFT STRIP -->
<div class="a" style="left:0;top:0;width:2px;height:839px;background:#ececec"></div>


<div class="a" style="left:1197px;top:821px;white-space:pre;font-size:20px;line-height:24px;color:rgba(255,255,255,0.11)">Активация Windows</div>
<svg style="left:1054px;top:805px" width="12" height="17" viewBox="0 0 12 18"><path d="M0.5 0.5V15L4 11.7L6.5 17.3L8.8 16.3L6.4 10.8H11z" fill="#fff" stroke="#000" stroke-width="1"/></svg>
</body></html>
